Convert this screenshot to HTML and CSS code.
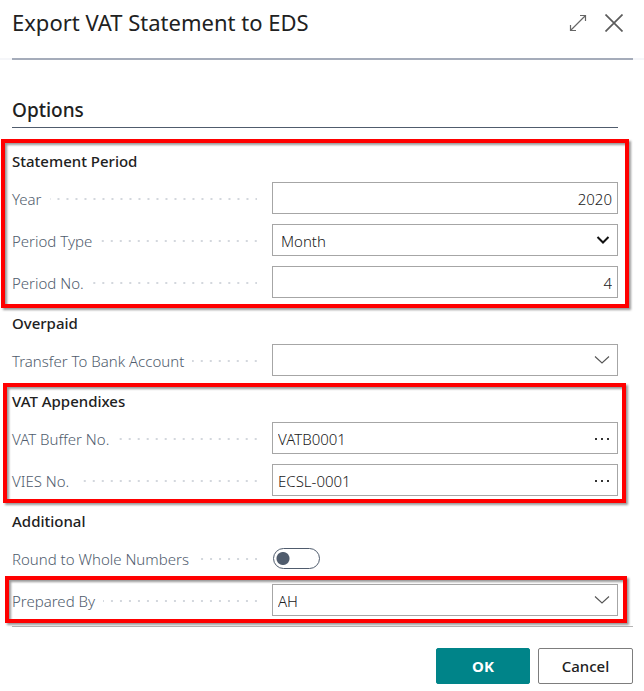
FILE: index.html
```html
<!DOCTYPE html>
<html lang="en">
<head>
<meta charset="utf-8">
<meta name="viewport" content="width=device-width, initial-scale=1">
<title>Export VAT Statement to EDS</title>
<link rel="stylesheet" href="styles.css">
</head>
<body>
<form class="dialog">
  <header class="header">
    <div class="header-inner">
      <h1 class="title">Export VAT Statement to EDS</h1>
      <button class="icon-button" type="button" aria-label="Expand">
        <svg width="18" height="18" viewBox="0 0 18 18" fill="none" stroke="#666" stroke-width="1.2"><path d="M1.5 16.5L16.5 1.5M11 1.5h5.500v5.500M1.5 11v5.500h5.500"/></svg>
      </button>
      <button class="icon-button" type="button" aria-label="Close">
        <svg width="18" height="18" viewBox="0 0 18 18" fill="none" stroke="#5c5c5c" stroke-width="1.7"><path d="M.5.5l17 17M17.5.5l-17 17"/></svg>
      </button>
    </div>
  </header>

  <main class="content">
    <h2 class="tab-title">Options</h2>

    <section class="group marked">
      <h3 class="group-title">Statement Period</h3>
      <div class="row">
        <label class="label" for="year">Year</label>
        <div class="field"><input class="box number" id="year" type="text" value="2020"></div>
      </div>
      <div class="row">
        <label class="label" for="period-type">Period Type</label>
        <div class="field">
          <select class="box select" id="period-type"><option>Month</option></select>
          <svg class="arrow" width="14" height="10" viewBox="0 0 14 10" fill="none" stroke="#111" stroke-width="2"><path d="M1.5 2L7 7.500L12.500 2"/></svg>
        </div>
      </div>
      <div class="row">
        <label class="label" for="period-no">Period No.</label>
        <div class="field"><input class="box number" id="period-no" type="text" value="4"></div>
      </div>
    </section>

    <section class="group">
      <h3 class="group-title">Overpaid</h3>
      <div class="row">
        <label class="label" for="bank">Transfer To Bank Account</label>
        <div class="field">
          <input class="box lookup" id="bank" type="text" value="">
          <button class="assist" type="button" aria-label="Choose bank account"><svg width="16" height="10" viewBox="0 0 16 10" fill="none" stroke="#555" stroke-width="1.1"><path d="M1 1.500l7 6.500l7-6.500"/></svg></button>
        </div>
      </div>
    </section>

    <section class="group marked marked-inner">
      <h3 class="group-title">VAT Appendixes</h3>
      <div class="row">
        <label class="label" for="buffer">VAT Buffer No.</label>
        <div class="field">
          <input class="box lookup" id="buffer" type="text" value="VATB0001">
          <button class="assist" type="button" aria-label="Look up VAT buffer"><svg width="16" height="10" viewBox="0 0 16 10" fill="#333"><path d="M1 5h2v2H1zM7 5h2v2H7zM13 5h2v2h-2z"/></svg></button>
        </div>
      </div>
      <div class="row">
        <label class="label" for="vies">VIES No.</label>
        <div class="field">
          <input class="box lookup" id="vies" type="text" value="ECSL-0001">
          <button class="assist" type="button" aria-label="Look up VIES"><svg width="16" height="10" viewBox="0 0 16 10" fill="#333"><path d="M1 5h2v2H1zM7 5h2v2H7zM13 5h2v2h-2z"/></svg></button>
        </div>
      </div>
    </section>

    <section class="group">
      <h3 class="group-title">Additional</h3>
      <div class="row">
        <label class="label" for="round">Round to Whole Numbers</label>
        <div class="field"><input class="toggle" id="round" type="checkbox" role="switch"></div>
      </div>
      <div class="row marked marked-row">
        <label class="label" for="prepared">Prepared By</label>
        <div class="field">
          <input class="box lookup" id="prepared" type="text" value="AH">
          <button class="assist" type="button" aria-label="Choose preparer"><svg width="16" height="10" viewBox="0 0 16 10" fill="none" stroke="#555" stroke-width="1.1"><path d="M1 1.500l7 6.500l7-6.500"/></svg></button>
        </div>
      </div>
    </section>
  </main>

  <footer class="footer">
    <button class="button primary" type="submit">OK</button>
    <button class="button" type="button">Cancel</button>
  </footer>
</form>
</body>
</html>
```
FILE: styles.css
```css
* {
  box-sizing: border-box;
}

body {
  margin: 0;
  background: #fff;
  color: #212121;
  font-family: "Noto Sans", "Open Sans", sans-serif;
  font-size: 15px;
  line-height: 20px;
}

h1, h2, h3 {
  margin: 0;
}

button, input, select {
  font: inherit;
  color: inherit;
}

/* Header */
.header {
  border-bottom: 2px solid #f5f6f9;
}

.header-inner {
  display: flex;
  align-items: center;
  gap: 18px;
  height: 60px;
  margin: 0 11px -2px 12px;
  padding: 0 10px 12px 0;
  border-bottom: 2px solid #a5acba;
}

.title {
  flex: 1;
  padding-bottom: 2px;
  font-size: 22px;
  line-height: 28px;
  font-weight: 450;
}

.icon-button {
  display: flex;
  padding: 0;
  border: 0;
  background: none;
}

/* Form */
.content {
  display: flex;
  flex-direction: column;
  gap: 16px;
  padding: 36px 26px 10px 12px;
}

.tab-title {
  padding-bottom: 3px;
  margin-bottom: 8px;
  border-bottom: 1px solid #505c6d;
  font-size: 19px;
  line-height: 28px;
  font-weight: 500;
}

.group {
  display: flex;
  flex-direction: column;
  gap: 10px;
}

.group-title {
  padding-bottom: 2px;
  font-size: 15px;
  line-height: 18px;
  font-weight: 500;
}

.row {
  display: grid;
  grid-template-columns: 248px 1fr;
  column-gap: 12px;
  align-items: center;
}

.label {
  display: flex;
  align-items: center;
  gap: 8px;
  padding-top: 1px;
  color: #505c6d;
  font-weight: 350;
}

/* Dotted leader between a label and its field */
.label::after {
  content: "";
  flex: 1;
  height: 2px;
  margin-right: 3px;
  background: linear-gradient(90deg, transparent 7px, #d3d7dd 7px) right / 9px 2px repeat-x;
}

.field {
  position: relative;
  display: flex;
  align-items: center;
  height: 32px;
}

.box {
  width: 100%;
  height: 32px;
  padding: 1px 5px 0;
  border: 1px solid #a6a6a6;
  border-radius: 0;
  background: #fff;
  font-weight: 350;
  outline: 0;
}

.number {
  text-align: right;
}

.select {
  padding-left: 8px;
  appearance: none;
}

.lookup {
  padding-right: 32px;
}

.arrow {
  position: absolute;
  right: 8px;
  pointer-events: none;
}

.assist {
  position: absolute;
  right: 8px;
  display: flex;
  padding: 0;
  border: 0;
  background: none;
}

.toggle {
  width: 47px;
  height: 21px;
  margin: 0 1px;
  border: 1px solid #505c6d;
  border-radius: 11px;
  appearance: none;
  background: radial-gradient(circle at 9px 50%, #505c6d 6px, transparent 7px);
}

/* Red highlight frames */
.marked {
  position: relative;
}

.marked::before {
  content: "";
  position: absolute;
  z-index: 1;
  inset: -13px -11px -10px;
  border: 4px solid #f00;
  filter: drop-shadow(2px 2px 1px rgba(0, 0, 0, 0.4));
  pointer-events: none;
}

.marked-inner::before {
  inset: -9px -8px -7px -9px;
}

.marked-row::before {
  inset: -8px -9px -7px -7px;
}

/* Footer */
.footer {
  display: flex;
  justify-content: flex-end;
  gap: 8px;
  margin: 0 11px 0 12px;
  padding: 21px 0 7px;
  border-top: 1px solid #b5b5b5;
}

.button {
  width: 95px;
  height: 36px;
  padding: 0;
  border: 1px solid #7d7d7d;
  border-radius: 2px;
  background: #fff;
  font-weight: 500;
}

.primary {
  width: 94px;
  border-color: #008489;
  background: #008489;
  color: #fff;
  font-weight: 700;
}
```
